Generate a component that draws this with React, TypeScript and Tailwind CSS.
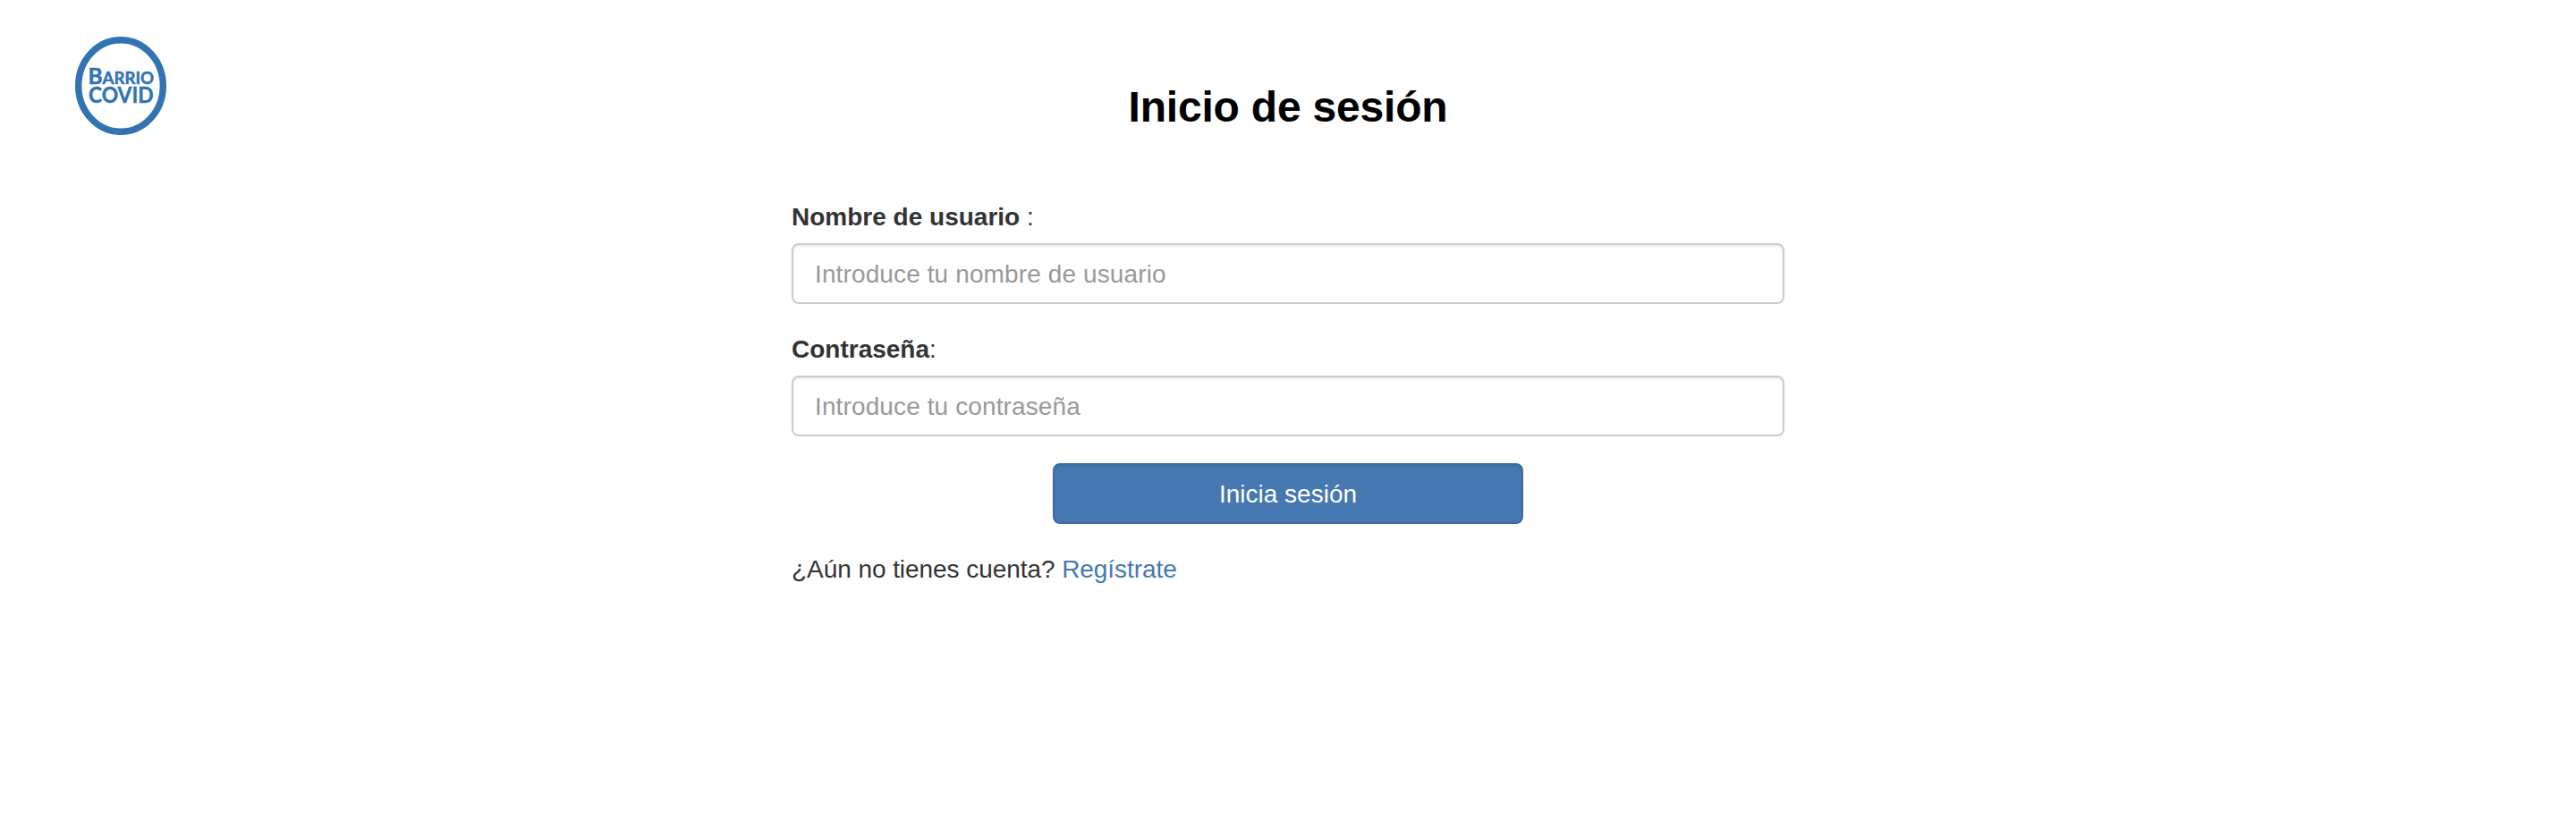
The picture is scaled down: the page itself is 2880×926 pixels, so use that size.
import React from "react";

const inputClass =
  "block h-[68px] w-full rounded-[8px] border-2 border-[#ccc] bg-white px-[24px] pt-[2px] text-[28px] leading-[40px] tracking-[0.12px] text-[#555] shadow-[inset_0_2px_2px_rgba(0,0,0,0.075)] outline-none placeholder:text-[#999] placeholder:opacity-100";

function Logo() {
  return (
    <svg
      width="102"
      height="110"
      viewBox="0 0 102 110"
      fill="#3173b3"
      fontFamily="Lato, sans-serif"
      fontWeight="700"
      role="img"
    >
      <ellipse cx="51" cy="55" rx="47.3" ry="51.3" fill="none" stroke="#3173b3" strokeWidth="7.4" />
      <g stroke="#3173b3" strokeWidth="0.5">
        <text x="14.5" y="52.7" fontSize="25" textLength="73.5" lengthAdjust="spacingAndGlyphs">
          B<tspan fontSize="19">ARRIO</tspan>
        </text>
        <text x="15" y="74" fontSize="25" textLength="72.5" lengthAdjust="spacingAndGlyphs">
          COVID
        </text>
      </g>
    </svg>
  );
}

export default function App() {
  return (
    <div className="flex h-[926px] w-full items-start bg-white font-['Liberation_Sans',Arial,sans-serif] text-[28px] leading-[40px] text-[#333]">
      <header className="w-[885px] shrink-0 pt-[41px] pl-[84px]">
        <Logo />
      </header>
      <main className="w-[1110px] shrink-0 pt-[93px]">
        <h1 className="mb-[76px] text-center text-[48px] leading-[54px] font-bold tracking-[-0.2px] text-black">
          Inicio de sesión
        </h1>
        <form onSubmit={(e) => e.preventDefault()}>
          <div className="mb-[30px]">
            <label htmlFor="user" className="mb-[9px] block">
              <b>Nombre de usuario</b> :
            </label>
            <input id="user" className={inputClass} placeholder="Introduce tu nombre de usuario" />
          </div>
          <div className="mb-[30px]">
            <label htmlFor="password" className="mb-[9px] block pt-px">
              <b>Contraseña</b>:
            </label>
            <input id="password" type="password" className={inputClass} placeholder="Introduce tu contraseña" />
          </div>
          <button className="mx-auto block h-[68px] w-[526px] rounded-[8px] border-2 border-[#406a9f] bg-[#4678b2] pt-[2px] text-center text-white shadow-[inset_0_2px_2px_rgba(0,0,0,0.075)]">
            Inicia sesión
          </button>
        </form>
        <p className="mt-[31px] tracking-[-0.06px]">
          ¿Aún no tienes cuenta?{" "}
          <a href="#" className="text-[#4678b2]">
            Regístrate
          </a>
        </p>
      </main>
    </div>
  );
}
